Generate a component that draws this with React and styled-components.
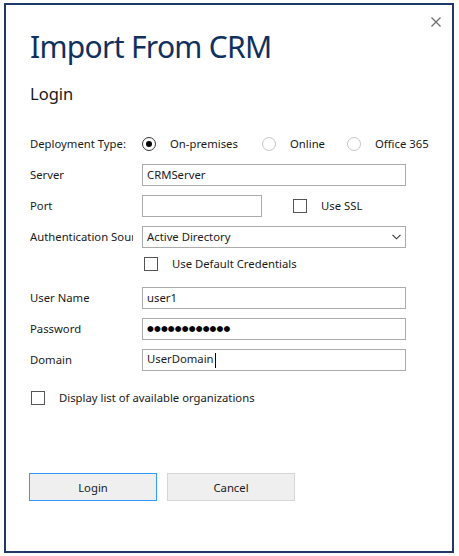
import styled, { createGlobalStyle } from "styled-components";

const Global = createGlobalStyle`
  body {
    margin: 0;
    background: #ffffff;
    font-family: "Noto Sans", "Open Sans", sans-serif;
  }
`;

const Dialog = styled.div`
  box-sizing: border-box;
  width: 450px;
  height: 550px;
  margin: 3px 0 0 4px;
  border: 2px solid #1f3a68;
  padding: 6px 5px 0 24px;
  display: flex;
  flex-direction: column;
  color: #1a1a1a;
  font-size: 11.3px;
`;

const TopBar = styled.div`
  display: flex;
  justify-content: space-between;
  align-items: flex-start;
`;

const Title = styled.h1`
  margin: 16px 0 0;
  font-size: 30px;
  line-height: 40px;
  font-weight: 400;
  letter-spacing: -0.7px;
  color: #10305e;
`;

const CloseButton = styled.button`
  width: 22px;
  height: 22px;
  padding: 0;
  border: none;
  background: transparent;
  display: flex;
  align-items: center;
  justify-content: center;
`;

const SubTitle = styled.h2`
  margin: 15px 0 0;
  font-size: 16.5px;
  line-height: 24px;
  font-weight: 400;
  color: #1a1a1a;
`;

const Form = styled.div`
  margin-top: 22px;
  display: flex;
  flex-direction: column;
`;

const Row = styled.div`
  display: flex;
  align-items: center;
  height: ${(p) => p.$h || 31}px;
  margin-top: ${(p) => p.$mt || 0}px;
`;

const Label = styled.div`
  width: 103px;
  margin-right: 9px;
  white-space: nowrap;
  overflow: hidden;
`;

const Field = styled.div`
  box-sizing: border-box;
  width: ${(p) => p.$w || 264}px;
  height: 22px;
  border: 1px solid #ababab;
  padding: 0 4px;
  display: flex;
  align-items: center;
  justify-content: space-between;
  background: #fff;
  white-space: nowrap;
`;

const Caret = styled.span`
  display: inline-block;
  width: 1px;
  height: 15px;
  background: #000;
  margin-left: 1px;
  vertical-align: middle;
`;

const Dots = styled.span`
  font-family: "DejaVu Sans", sans-serif;
  font-size: 7.8px;
  letter-spacing: 0.15px;
  color: #000;
`;

const RadioGroup = styled.div`
  display: flex;
  align-items: center;
`;

const Option = styled.label`
  display: flex;
  align-items: center;
  gap: 14px;
  width: ${(p) => (p.$w ? `${p.$w}px` : "auto")};
  margin-left: ${(p) => p.$ml || 0}px;
  white-space: nowrap;
`;

const RadioCircle = styled.span`
  box-sizing: border-box;
  width: 14px;
  height: 14px;
  border-radius: 50%;
  border: 1px solid ${(p) => (p.$on ? "#333333" : "#c6c6c6")};
  display: flex;
  align-items: center;
  justify-content: center;
  &::after {
    content: "";
    width: 6px;
    height: 6px;
    border-radius: 50%;
    background: ${(p) => (p.$on ? "#000" : "transparent")};
  }
`;

const CheckBox = styled.span`
  box-sizing: border-box;
  width: 14px;
  height: 14px;
  border: 1px solid #555;
  background: #fff;
`;

const Buttons = styled.div`
  display: flex;
  gap: 10px;
  margin-top: 64px;
  margin-left: -1px;
`;

const Button = styled.button`
  box-sizing: border-box;
  width: 128px;
  height: 28px;
  font-family: inherit;
  font-size: 11.3px;
  color: #1a1a1a;
  background: #efefef;
  border: 1px solid ${(p) => (p.$primary ? "#3399ff" : "#d6d6d6")};
  padding: 0;
`;

const Radio = ({ on, label, w }) => (
  <Option $w={w}>
    <RadioCircle $on={on} />
    {label}
  </Option>
);

const Check = ({ label, ml }) => (
  <Option $ml={ml}>
    <CheckBox />
    {label}
  </Option>
);

const App = () => (
  <>
    <Global />
    <Dialog>
      <TopBar>
        <Title>Import From CRM</Title>
        <CloseButton aria-label="Close">
          <svg width="10" height="10" viewBox="0 0 10 10">
            <path d="M0.5 0.5 L9.5 9.5 M9.5 0.5 L0.5 9.5" stroke="#6e6e6e" strokeWidth="1.3" />
          </svg>
        </CloseButton>
      </TopBar>
      <SubTitle>Login</SubTitle>

      <Form>
        <Row>
          <Label>Deployment Type:</Label>
          <RadioGroup>
            <Radio on label="On-premises" w={120} />
            <Radio label="Online" w={85} />
            <Radio label="Office 365" />
          </RadioGroup>
        </Row>
        <Row>
          <Label>Server</Label>
          <Field>CRMServer</Field>
        </Row>
        <Row>
          <Label>Port</Label>
          <Field $w={120} />
          <Check label="Use SSL" ml={31} />
        </Row>
        <Row>
          <Label>Authentication Source</Label>
          <Field>
            Active Directory
            <svg width="9" height="6" viewBox="0 0 9 6">
              <path d="M0.5 0.8 L4.5 4.8 L8.5 0.8" fill="none" stroke="#333" strokeWidth="1.1" />
            </svg>
          </Field>
        </Row>
        <Row $h={23}>
          <Check label="Use Default Credentials" ml={114} />
        </Row>

        <Row $mt={7}>
          <Label>User Name</Label>
          <Field>user1</Field>
        </Row>
        <Row>
          <Label>Password</Label>
          <Field>
            <Dots>●●●●●●●●●●●●</Dots>
          </Field>
        </Row>
        <Row>
          <Label>Domain</Label>
          <Field>
            <span>
              UserDomain
              <Caret />
            </span>
          </Field>
        </Row>

        <Row $h={23} $mt={11}>
          <Check label="Display list of available organizations" ml={1} />
        </Row>
      </Form>

      <Buttons>
        <Button $primary>Login</Button>
        <Button>Cancel</Button>
      </Buttons>
    </Dialog>
  </>
);

export default App;
